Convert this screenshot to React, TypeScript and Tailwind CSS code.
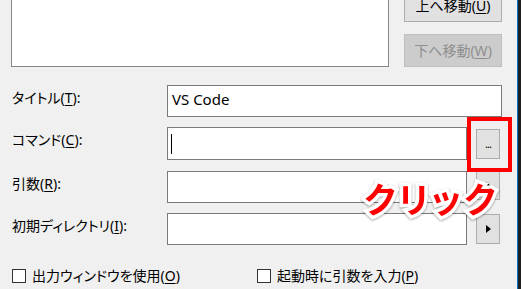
import React from "react";

function Label({ text, k, rest }: { text: string; k: string; rest: string }) {
  return (
    <div className="w-[155px] pt-[3px] leading-[20px]">
      {text}(<u className="underline-offset-2">{k}</u>){rest}
    </div>
  );
}

function SideButton({ h, mt, children }: { h: string; mt: string; children: React.ReactNode }) {
  return (
    <div
      className={`ml-[9px] w-[24px] ${h} ${mt} flex items-center justify-center border border-[#adadad] bg-[#e1e1e1] text-[12px] leading-none`}
    >
      {children}
    </div>
  );
}

function Arrow() {
  return (
    <svg width="7" height="10" viewBox="0 0 7 10">
      <path d="M1 1 L6 5 L1 9 Z" fill="#000" />
    </svg>
  );
}

function Check({ label, k }: { label: string; k: string }) {
  return (
    <div className="flex items-center gap-[6px]">
      <div className="h-[14px] w-[14px] border border-[#333] bg-white" />
      <span className="leading-[20px]">
        {label}(<u className="underline-offset-2">{k}</u>)
      </span>
    </div>
  );
}

export default function App() {
  return (
    <div className="flex h-[289px] w-[521px] overflow-hidden bg-[#f0f0f0] font-['Noto_Sans','Noto_Sans_CJK_JP',sans-serif] text-[14px] text-black [font-feature-settings:'palt']">
      <div className="relative flex flex-1 flex-col">
        {/* list + move buttons */}
        <div className="-mt-[11px] ml-[11px] flex">
          <div className="h-[78px] w-[378px] border border-[#828790] bg-white" />
          <div className="ml-[15px] flex w-[98px] flex-col gap-[12px]">
            <div className="flex h-[33px] items-center justify-center border border-[#adadad] bg-[#e1e1e1]">
              上へ移動(<u className="underline-offset-2">U</u>)
            </div>
            <div className="flex h-[33px] items-center justify-center border border-[#bfbfbf] bg-[#cccccc] text-[#8f8f8f]">
              下へ移動(<u className="underline-offset-2">W</u>)
            </div>
          </div>
        </div>

        {/* form */}
        <div className="ml-[12px] mt-[18px] flex flex-col">
          <div className="flex items-start">
            <Label text="タイトル" k="T" rest=":" />
            <div className="flex h-[32px] w-[335px] items-center border border-[#7a7a7a] bg-white pb-[3px] pl-[4px] text-[15px]">
              VS Code
            </div>
          </div>

          <div className="mt-[10px] flex items-start">
            <Label text="コマンド" k="C" rest=":" />
            <div className="flex h-[33px] w-[300px] items-center border border-[#7a7a7a] bg-white pl-[3px]">
              <div className="h-[20px] w-px bg-black" />
            </div>
            <div className="relative">
              <SideButton h="h-[30px]" mt="mt-[2px]">
                <span className="pb-[2px] text-[11px] tracking-[-1px]">...</span>
              </SideButton>
              <div className="absolute left-0 top-[-10px] h-[55px] w-[45px] border-[4px] border-[#ff0000]" />
            </div>
          </div>

          <div className="mt-[11px] flex items-start">
            <Label text="引数" k="R" rest=":" />
            <div className="h-[32px] w-[300px] border border-[#7a7a7a] bg-white" />
            <SideButton h="h-[29px]" mt="mt-0">
              <Arrow />
            </SideButton>
          </div>

          <div className="mt-[10px] flex items-start">
            <Label text="初期ディレクトリ" k="I" rest=":" />
            <div className="h-[32px] w-[300px] border border-[#7a7a7a] bg-white" />
            <SideButton h="h-[30px]" mt="mt-[1px]">
              <Arrow />
            </SideButton>
          </div>

          <div className="mt-[21px] flex">
            <div className="w-[245px]">
              <Check label="出力ウィンドウを使用" k="O" />
            </div>
            <Check label="起動時に引数を入力" k="P" />
          </div>
        </div>

        {/* annotation */}
        <div className="absolute left-[364px] top-[178px] text-[35px] font-bold leading-[44px] tracking-[3px] text-[#ff0000] [paint-order:stroke_fill] [-webkit-text-stroke:7px_white] [filter:drop-shadow(0_1px_1px_rgba(0,0,0,0.35))]">
          クリック
        </div>
      </div>
      <div className="w-px bg-[#0078d7]" />
      <div className="w-[3px] bg-[#1f1f1f]" />
    </div>
  );
}
